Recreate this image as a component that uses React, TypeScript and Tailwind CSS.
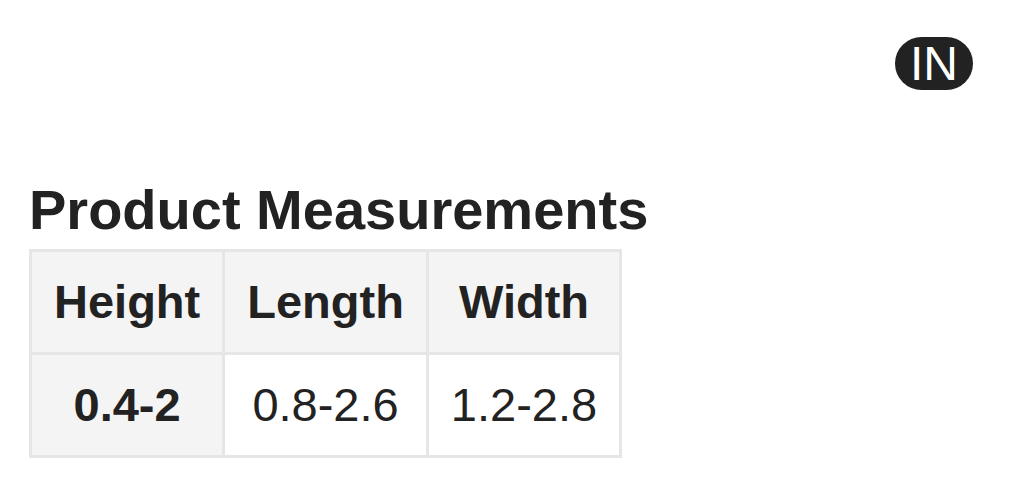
import React from 'react';

// Measurement table rows
const headers = ['Height', 'Length', 'Width'];
const values = ['0.4-2', '0.8-2.6', '1.2-2.8'];

export default function App() {
    return (
        <div className="min-h-[489px] bg-white text-[#222] font-['Liberation_Sans',Arial,sans-serif]">
            {/* Unit badge */}
            <div className="flex justify-end pt-[37px] pr-[36px]">
                <span className="flex h-[53px] w-[78px] items-center justify-center rounded-full bg-[#222] text-[48px] leading-none text-white">
                    IN
                </span>
            </div>

            <div className="pl-[29px]">
                <h2 className="mt-[88px] text-[56px] font-bold leading-[64px]">Product Measurements</h2>

                <table className="mt-[7px] border-collapse border-[3px] border-[#e6e6e6] text-[47px] leading-[54px]">
                    <thead>
                        <tr>
                            {headers.map(h => (
                                <th key={h} className="border-[3px] border-[#e6e6e6] bg-[#f4f4f4] px-[22px] py-[23px] text-center font-bold">
                                    {h}
                                </th>
                            ))}
                        </tr>
                    </thead>
                    <tbody>
                        <tr>
                            <th className="border-[3px] border-[#e6e6e6] bg-[#f4f4f4] px-[22px] py-[23px] text-center font-bold">
                                {values[0]}
                            </th>
                            {values.slice(1).map(v => (
                                <td key={v} className="border-[3px] border-[#e6e6e6] bg-white px-[22px] py-[23px] text-center">
                                    {v}
                                </td>
                            ))}
                        </tr>
                    </tbody>
                </table>
            </div>
        </div>
    );
}
